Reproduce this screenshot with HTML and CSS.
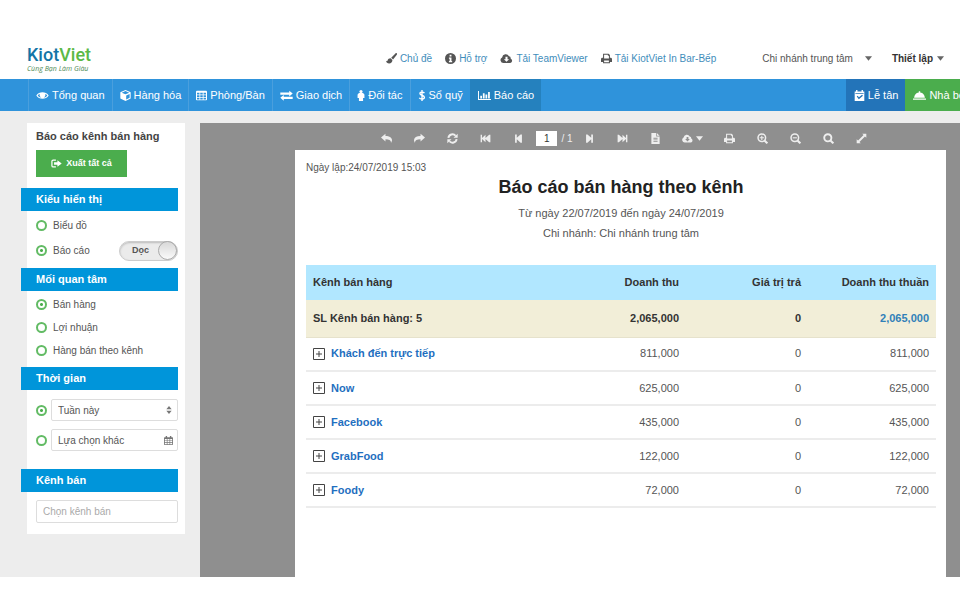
FILE: index.html
```html
<!DOCTYPE html>
<html lang="vi">
<head>
  <meta charset="UTF-8" />
  <meta name="viewport" content="width=device-width, initial-scale=1.0" />
  <title>KiotViet - Báo cáo kênh bán hàng</title>
  <link rel="stylesheet" href="styles.css">
</head>
<body>
  <svg class="sprite" aria-hidden="true">
    <symbol id="brush" viewBox="0 0 16 16"><path d="M15.6.5c.6.6.5 1.3.1 2L10.300 9.300 7.600 6.900 13.700.7c.6-.6 1.300-.7 1.900-.2zM6.700 7.800l2.600 2.500c.2 3.200-1.900 5.100-4.700 5.100C2 15.400.5 14 0 11.400c1 .6 1.900.7 2.300-.4.7-2 2.300-3.300 4.400-3.200z"/></symbol>
    <symbol id="info" viewBox="0 0 16 16"><path fill-rule="evenodd" d="M8 0a8 8 0 1 1 0 16A8 8 0 0 1 8 0zM6.700 2.500v2.600h2.700V2.500zM5.700 6.500v1.700h1v3.300h-1v1.800h4.700v-1.800h-1v-5z"/></symbol>
    <symbol id="cloud" viewBox="0 0 18 16"><path fill-rule="evenodd" d="M4.500 14.500A4.300 4.300 0 0 1 2.600 6.400 5.300 5.300 0 0 1 12.600 4.800a3 3 0 0 1 2.500 3.400 3.300 3.300 0 0 1-.6 6.300zM7.500 5.500V9H5.200L9 12.800 12.800 9h-2.300V5.500z"/></symbol>
    <symbol id="print" viewBox="0 0 16 16"><path fill-rule="evenodd" d="M3 1h8l2 2v4h1a2 2 0 0 1 2 2v4h-3v2H3v-2H0V9a2 2 0 0 1 2-2h1zm1.500 1.500V8h7V4H10V2.500zM4.500 11v2.500h7V11z"/></symbol>
    <symbol id="caret" viewBox="0 0 8 5"><path d="M0 0h8L4 5z"/></symbol>
    <symbol id="eye" viewBox="0 0 18 16"><path fill-rule="evenodd" d="M0 8c4-6.300 14-6.300 18 0-4 6.300-14 6.300-18 0zm2 0c1.500 2 3.800 3.300 7 3.300S14.500 10 16 8a8 8 0 0 0-3-2.500 4.300 4.300 0 1 1-8 0A8 8 0 0 0 2 8z"/><circle cx="9" cy="7.500" r="2.700"/></symbol>
    <symbol id="cube" viewBox="0 0 16 16"><path fill-rule="evenodd" d="M8 0l7.500 3.200v9L8 16 .5 12.200v-9zm0 1.600L2.600 3.900 8 6.200l5.400-2.300zM9 8v5.800l5-2.600V5.800z"/></symbol>
    <symbol id="table" viewBox="0 0 16 16"><path fill-rule="evenodd" d="M1 1h14l1 1v12l-1 1H1l-1-1V2zm.5 3v2.500H5V4zM6.200 4v2.500h3.600V4zM11 4v2.500h3.500V4zM1.500 7.700v2.500H5V7.700zm4.700 0v2.500h3.600V7.700zm4.800 0v2.500h3.500V7.700zM1.500 11.400v2.300H5v-2.300zm4.700 0v2.300h3.600v-2.300zm4.800 0v2.300h3.500v-2.300z"/></symbol>
    <symbol id="exchange" viewBox="0 0 18 16"><path d="M0 3.500h13V1L18 5.200 13 9.300V6.800H0zM18 13H5v2.500L0 11.300l5-4.100v2.500h13z"/></symbol>
    <symbol id="person" viewBox="0 0 10 16"><circle cx="5" cy="2.300" r="2.300"/><path d="M2 4.500h6l2 2v5H8V16H2v-4.500H0v-5z"/></symbol>
    <symbol id="dollar" viewBox="0 0 10 16"><path d="M8.500 4.500C7.500 3 2 2 2 5c0 3.300 6.500 2 6.500 5.700 0 3.300-5.500 3.300-7.500.8M5 0v16" fill="none" stroke="currentColor" stroke-width="2"/></symbol>
    <symbol id="chart" viewBox="0 0 20 16"><path d="M0 1h1.500v12.500H20V15H0zM3.500 8.500h2.700v4H3.500zM7.500 4.500h2.700v8H7.500zM11.500 6.500h2.700v6h-2.700zM15.500 2.500h2.700v10h-2.700z"/></symbol>
    <symbol id="booking" viewBox="0 0 16 16"><path fill-rule="evenodd" d="M3 0h2v2h6V0h2v2h2v14H1V2h2zM2 4.500v1h12v-1zm2 5L7 13.300l6-5-1.300-1.500L7.200 10.600 5.200 8.200z"/></symbol>
    <symbol id="bell" viewBox="0 0 18 14"><path d="M8 1h2v2c4 .5 6 3.500 6.500 7h-15C2 6.500 4 3.500 8 3zM0 11h18v2H0z"/></symbol>
    <symbol id="export" viewBox="0 0 18 16"><path d="M8 2.300H3.500Q1.500 2.300 1.500 4.500v7q0 2.200 2 2.200H8" fill="none" stroke="currentColor" stroke-width="2"/><path d="M5 6h5.500V2.500L17.500 8l-7 5.500V10H5z"/></symbol>
    <symbol id="updown" viewBox="0 0 8 12"><path d="M0 5l4-5 4 5zM0 7l4 5 4-5z"/></symbol>
    <symbol id="calendar" viewBox="0 0 16 16"><path fill-rule="evenodd" d="M3 0h2.500v2h5V0H13v2h2l1 1v12l-1 1H1l-1-1V3l1-1h2zM1.500 5.500v2.300H5V5.500zm4.700 0v2.300h3.600V5.500zm4.800 0v2.300h3.500V5.500zM1.500 9v2.300H5V9zm4.700 0v2.300h3.600V9zM11 9v2.300h3.500V9zm-9.500 3.500v2H5v-2zm4.700 0v2h3.600v-2zm4.800 0v2h3.500v-2z"/></symbol>
    <symbol id="undo" viewBox="0 0 16 16"><path d="M6.500 1v3.500c6 0 9 2.500 9.500 5.500.2 1.500-.7 3.300-1.500 4.500.5-4-2.500-5.500-8-5.500v3.500L0 6.700z"/></symbol>
    <symbol id="redo" viewBox="0 0 16 16"><path d="M9.500 1v3.500c-6 0-9 2.500-9.500 5.500-.2 1.500.7 3.300 1.500 4.500C1 10.500 4 9 9.500 9v3.500L16 6.700z"/></symbol>
    <symbol id="refresh" viewBox="0 0 16 16"><path d="M2 7a6 6 0 0 1 10.500-3M14 9a6 6 0 0 1-10.500 3" fill="none" stroke="currentColor" stroke-width="2.800"/><path d="M15.500 1v6h-6zM.5 15V9h6z"/></symbol>
    <symbol id="first" viewBox="0 0 18 16"><path d="M1 2h2.300v5L9 2v5l6-5h2v12h-2L9 9v5L3.300 9v5H1z"/></symbol>
    <symbol id="prev" viewBox="0 0 12 16"><path d="M1 2h2.500v5L9 2h2v12H9L3.500 9v5H1z"/></symbol>
    <symbol id="next" viewBox="0 0 12 16"><path d="M11 2H8.500v5L3 2H1v12h2l5.500-5v5H11z"/></symbol>
    <symbol id="last" viewBox="0 0 18 16"><path d="M17 2h-2.300v5L9 2v5L3 2H1v12h2l6-5v5l5.700-5v5H17z"/></symbol>
    <symbol id="file" viewBox="0 0 14 16"><path fill-rule="evenodd" d="M1 0h7v5h5v11H1zm8 0l4 4H9zM4 7v1.200h6V7zm0 2.500v1.200h6V9.500zM4 12v1.200h6V12z"/></symbol>
    <symbol id="zoomin" viewBox="0 0 16 16"><path d="M10.500 10.500L15 15" stroke="currentColor" stroke-width="3"/><circle cx="7" cy="7" r="5.500" fill="none" stroke="currentColor" stroke-width="2.200"/><path d="M6.200 4h1.600v2.200H10v1.600H7.800V10H6.200V7.800H4V6.200h2.200z"/></symbol>
    <symbol id="zoomout" viewBox="0 0 16 16"><path d="M10.500 10.500L15 15" stroke="currentColor" stroke-width="3"/><circle cx="7" cy="7" r="5.500" fill="none" stroke="currentColor" stroke-width="2.200"/><path d="M4 6.200h6v1.600H4z"/></symbol>
    <symbol id="search" viewBox="0 0 16 16"><path d="M10.500 10.500L15 15" stroke="currentColor" stroke-width="3"/><circle cx="7" cy="7" r="5.200" fill="none" stroke="currentColor" stroke-width="2.800"/></symbol>
    <symbol id="expand" viewBox="0 0 16 16"><path d="M9 1h6v6l-2-2-8 8 2 2H1V9l2 2 8-8z"/></symbol>
    <symbol id="plus" viewBox="0 0 12 12"><path d="M.5.5h11v11H.5zM6 3v6M3 6h6" fill="none" stroke="currentColor"/></symbol>
  </svg>

  <header class="header">
    <a class="logo" href="#">
      <span class="logo-name">Kiot<span class="logo-green">Viet</span></span>
      <span class="logo-slogan">Cùng Bạn Làm Giàu</span>
    </a>
    <div class="header-links">
      <a href="#"><svg class="icon"><use href="#brush"/></svg>Chủ đề</a>
      <a href="#"><svg class="icon"><use href="#info"/></svg>Hỗ trợ</a>
      <a href="#"><svg class="icon icon-wide"><use href="#cloud"/></svg>Tải TeamViewer</a>
      <a href="#"><svg class="icon"><use href="#print"/></svg>Tải KiotViet In Bar-Bếp</a>
    </div>
    <button class="header-menu branch">Chi nhánh trung tâm<svg class="caret"><use href="#caret"/></svg></button>
    <button class="header-menu setup">Thiết lập<svg class="caret"><use href="#caret"/></svg></button>
  </header>

  <nav class="nav">
    <a href="#"><svg class="icon icon-wide"><use href="#eye"/></svg>Tổng quan</a>
    <a href="#"><svg class="icon"><use href="#cube"/></svg>Hàng hóa</a>
    <a href="#"><svg class="icon"><use href="#table"/></svg>Phòng/Bàn</a>
    <a href="#"><svg class="icon icon-wide"><use href="#exchange"/></svg>Giao dịch</a>
    <a href="#"><svg class="icon icon-thin"><use href="#person"/></svg>Đối tác</a>
    <a href="#"><svg class="icon icon-thin"><use href="#dollar"/></svg>Sổ quỹ</a>
    <a href="#" class="active"><svg class="icon icon-wide"><use href="#chart"/></svg>Báo cáo</a>
    <a href="#" class="reception"><svg class="icon"><use href="#booking"/></svg>Lễ tân</a>
    <a href="#" class="kitchen"><svg class="icon icon-wide"><use href="#bell"/></svg>Nhà bếp</a>
  </nav>

  <main class="main">
    <aside class="sidebar">
      <h1>Báo cáo kênh bán hàng</h1>
      <button class="export"><svg class="icon"><use href="#export"/></svg>Xuất tất cả</button>

      <h2>Kiểu hiển thị</h2>
      <div class="options view-options">
        <label><input type="radio" name="view">Biểu đồ</label>
        <div class="option-row">
          <label><input type="radio" name="view" checked>Báo cáo</label>
          <button class="toggle" role="switch" aria-checked="true">Dọc<span class="knob"></span></button>
        </div>
      </div>

      <h2>Mối quan tâm</h2>
      <div class="options">
        <label><input type="radio" name="concern" checked>Bán hàng</label>
        <label><input type="radio" name="concern">Lợi nhuận</label>
        <label><input type="radio" name="concern">Hàng bán theo kênh</label>
      </div>

      <h2>Thời gian</h2>
      <div class="fields time-fields">
        <div class="field-row">
          <input type="radio" name="time" aria-label="Theo kỳ" checked>
          <div class="field">
            <select aria-label="Thời gian"><option>Tuần này</option></select>
            <svg class="field-icon updown"><use href="#updown"/></svg>
          </div>
        </div>
        <div class="field-row">
          <input type="radio" name="time" aria-label="Lựa chọn khác">
          <div class="field">
            <input type="text" aria-label="Khoảng thời gian" value="Lựa chọn khác">
            <svg class="field-icon calendar"><use href="#calendar"/></svg>
          </div>
        </div>
      </div>

      <h2>Kênh bán</h2>
      <div class="fields">
        <div class="field"><input type="text" aria-label="Kênh bán" placeholder="Chọn kênh bán"></div>
      </div>
    </aside>

    <section class="viewer">
      <div class="toolbar">
        <button aria-label="Quay lại"><svg class="icon"><use href="#undo"/></svg></button>
        <button aria-label="Tiếp"><svg class="icon"><use href="#redo"/></svg></button>
        <button aria-label="Tải lại"><svg class="icon"><use href="#refresh"/></svg></button>
        <button aria-label="Trang đầu"><svg class="icon"><use href="#first"/></svg></button>
        <button aria-label="Trang trước"><svg class="icon"><use href="#prev"/></svg></button>
        <label class="pager"><input type="text" aria-label="Trang" value="1">/ 1</label>
        <button aria-label="Trang sau"><svg class="icon"><use href="#next"/></svg></button>
        <button aria-label="Trang cuối"><svg class="icon"><use href="#last"/></svg></button>
        <button aria-label="Xem bản in"><svg class="icon"><use href="#file"/></svg></button>
        <button class="download" aria-label="Tải xuống"><svg class="icon"><use href="#cloud"/></svg><svg class="caret"><use href="#caret"/></svg></button>
        <button aria-label="In"><svg class="icon"><use href="#print"/></svg></button>
        <button aria-label="Phóng to"><svg class="icon"><use href="#zoomin"/></svg></button>
        <button aria-label="Thu nhỏ"><svg class="icon"><use href="#zoomout"/></svg></button>
        <button aria-label="Tìm"><svg class="icon"><use href="#search"/></svg></button>
        <button aria-label="Toàn màn hình"><svg class="icon"><use href="#expand"/></svg></button>
      </div>

      <article class="page">
        <p class="created">Ngày lập:24/07/2019 15:03</p>
        <h2 class="title">Báo cáo bán hàng theo kênh</h2>
        <p class="subtitle">Từ ngày 22/07/2019 đến ngày 24/07/2019</p>
        <p class="subtitle">Chi nhánh: Chi nhánh trung tâm</p>

        <table class="report">
          <thead>
            <tr><th>Kênh bán hàng</th><th>Doanh thu</th><th>Giá trị trả</th><th>Doanh thu thuần</th></tr>
          </thead>
          <tbody>
            <tr class="total"><td>SL Kênh bán hàng: 5</td><td>2,065,000</td><td>0</td><td class="net">2,065,000</td></tr>
            <tr><td><a href="#"><svg class="plus"><use href="#plus"/></svg>Khách đến trực tiếp</a></td><td>811,000</td><td>0</td><td>811,000</td></tr>
            <tr><td><a href="#"><svg class="plus"><use href="#plus"/></svg>Now</a></td><td>625,000</td><td>0</td><td>625,000</td></tr>
            <tr><td><a href="#"><svg class="plus"><use href="#plus"/></svg>Facebook</a></td><td>435,000</td><td>0</td><td>435,000</td></tr>
            <tr><td><a href="#"><svg class="plus"><use href="#plus"/></svg>GrabFood</a></td><td>122,000</td><td>0</td><td>122,000</td></tr>
            <tr><td><a href="#"><svg class="plus"><use href="#plus"/></svg>Foody</a></td><td>72,000</td><td>0</td><td>72,000</td></tr>
          </tbody>
        </table>
      </article>
    </section>
  </main>
</body>
</html>
```
FILE: styles.css
```css
* {
  box-sizing: border-box;
}
body {
  display: flex;
  flex-direction: column;
  min-height: 100vh;
  margin: 0;
  padding-bottom: 23px;
  overflow-x: hidden;
  background: #fff;
  color: #555;
  font: 10px/15px "Liberation Sans", Arial, sans-serif;
}
h1, h2, p {
  margin: 0;
}
a {
  text-decoration: none;
}
button, input, select {
  margin: 0;
  font: inherit;
  color: inherit;
}
button {
  padding: 0;
  border: 0;
  background: none;
  cursor: pointer;
}
.sprite {
  position: absolute;
  width: 0;
  height: 0;
}
.icon {
  flex: none;
  width: 11px;
  height: 11px;
  fill: currentColor;
}
.icon-wide {
  width: 13px;
}
.icon-thin {
  width: 8px;
}
.caret {
  width: 7px;
  height: 5px;
  fill: currentColor;
}

/* header */
.header {
  display: flex;
  align-items: center;
  height: 79px;
  padding: 38px 16px 0 27px;
}
.logo {
  display: flex;
  flex-direction: column;
}
.logo-name {
  font: 500 18px/20px Roboto, sans-serif;
  color: #1374a6;
}
.logo-green {
  color: #5bb947;
}
.logo-slogan {
  font: italic 7px/8px "Open Sans", sans-serif;
  color: #4f8a56;
}
.header-links {
  display: flex;
  gap: 13px;
  margin-left: auto;
}
.header-links a {
  display: flex;
  align-items: center;
  gap: 3px;
  color: #3f8dbb;
}
.header-links .icon {
  color: #555;
}
.header-menu {
  display: flex;
  align-items: center;
}
.branch {
  gap: 12px;
  margin: 0 20px 0 46px;
}
.setup {
  gap: 4px;
  color: #333;
  font-weight: bold;
}
.header-menu .caret {
  color: #666;
}

/* navigation */
.nav {
  display: flex;
  height: 32px;
  margin-right: -18px;
  padding-left: 28px;
  background: #2f93db;
  font-size: 11px;
}
.nav a {
  display: flex;
  align-items: center;
  gap: 3px;
  padding: 0 7px;
  border-left: 1px solid #4a9fdd;
  color: #fff;
  white-space: nowrap;
}
.nav .active {
  border-color: #2581be;
  background: #2581be;
}
.nav .reception {
  margin-left: auto;
  border-color: #2374b9;
  background: #2374b9;
}
.nav .kitchen {
  border-color: #4bad4d;
  background: #4bad4d;
}

.main {
  display: flex;
  flex: 1;
  gap: 15px;
  padding: 12px 0 0 27px;
  background: #ededed;
}

/* filters */
.sidebar {
  flex: none;
  align-self: flex-start;
  width: 158px;
  padding: 0 7px 11px 9px;
  background: #fff;
}
.sidebar h1 {
  font-size: 11px;
  line-height: 27px;
  color: #444;
  white-space: nowrap;
}
.export {
  display: flex;
  align-items: center;
  justify-content: center;
  gap: 4px;
  width: 91px;
  height: 27px;
  margin-bottom: 11px;
  background: #4bad4d;
  color: #fff;
  font-size: 9px;
  font-weight: bold;
}
.sidebar h2 {
  margin-left: -15px;
  padding-left: 15px;
  background: #0095da;
  color: #fff;
  font-size: 11px;
  line-height: 23px;
}
.options {
  padding: 2px 0 5px;
}
.options label {
  display: flex;
  align-items: center;
  gap: 6px;
  height: 23px;
}
.view-options label {
  height: 25px;
}
.option-row {
  display: flex;
  align-items: center;
  justify-content: space-between;
}
input[type="radio"] {
  flex: none;
  width: 11px;
  height: 11px;
  border: 2px solid #62bb64;
  border-radius: 50%;
  background: #fff;
  appearance: none;
}
input[type="radio"]:checked {
  background: radial-gradient(circle, #4bad4d 1px, #fff 2px);
}
.toggle {
  display: flex;
  align-items: center;
  justify-content: space-between;
  width: 59px;
  height: 20px;
  padding-left: 12px;
  border: 1px solid #ccc;
  border-radius: 10px;
  background: #ebebeb;
  box-shadow: inset 0 1px 2px #bbb;
  font-size: 9px;
  font-weight: bold;
}
.knob {
  width: 19px;
  height: 19px;
  border: 1px solid #aaa;
  border-radius: 50%;
  background: linear-gradient(#d8d8d8, #fafafa);
}
.fields {
  padding-top: 8px;
}
.time-fields {
  display: grid;
  gap: 8px;
  padding: 9px 0 18px;
}
.field-row {
  display: flex;
  align-items: center;
  gap: 4px;
}
.field {
  position: relative;
  flex: 1;
}
.field select,
.field input {
  display: block;
  width: 100%;
  height: 23px;
  padding: 0 6px;
  border: 1px solid #ddd;
  border-radius: 2px;
  background: #fff;
  appearance: none;
}
.field-row select,
.field-row input[type="text"] {
  height: 22px;
}
.field input::placeholder {
  color: #aaa;
}
.field-icon {
  position: absolute;
  top: 7px;
  right: 5px;
  width: 8px;
  height: 8px;
  fill: #777;
}
.calendar {
  width: 9px;
  height: 9px;
}

/* report viewer */
.viewer {
  display: flex;
  flex: 1;
  flex-direction: column;
  min-width: 0;
  padding: 0 14px 0 95px;
  background: #8f8f8f;
}
.toolbar {
  display: flex;
  align-items: center;
  justify-content: center;
  height: 27px;
  padding: 4px 0 0 6px;
  color: #eee;
}
.toolbar button {
  display: flex;
  align-items: center;
  justify-content: center;
  gap: 3px;
  width: 33px;
}
.toolbar .download {
  width: 41px;
}
.pager {
  display: flex;
  align-items: center;
  justify-content: flex-end;
  gap: 4px;
  width: 38px;
  white-space: nowrap;
}
.pager input {
  width: 21px;
  height: 15px;
  padding: 0;
  border: 0;
  background: #fff;
  color: #333;
  text-align: center;
}
.page {
  flex: 1;
  padding: 10px 10px 20px 11px;
  background: #fff;
  font-size: 11px;
}
.created {
  font-size: 10px;
}
.title {
  margin-bottom: 4px;
  font-size: 18px;
  line-height: 24px;
  color: #222;
  text-align: center;
}
.subtitle {
  line-height: 20px;
  text-align: center;
}
.report {
  width: 100%;
  margin-top: 22px;
  border-collapse: collapse;
  table-layout: fixed;
}
.report th,
.report td {
  height: 34px;
  padding: 0 7px;
  border-bottom: 2px solid #ececec;
  text-align: right;
  white-space: nowrap;
}
.report th:first-child,
.report td:first-child {
  width: 40%;
  text-align: left;
}
.report th {
  height: 35px;
  border: 0;
  background: #b1e7ff;
  color: #333;
}
.report th:nth-child(3) {
  width: 122px;
}
.report .total td {
  height: 37px;
  border-bottom: 1px solid #e6e2cc;
  background: #f2eed8;
  color: #333;
  font-weight: bold;
}
.report .total .net {
  color: #3080b8;
}
.report a {
  display: flex;
  align-items: center;
  gap: 6px;
  color: #1f6fc0;
  font-weight: bold;
}
.plus {
  width: 12px;
  height: 12px;
  color: #444;
}
```
